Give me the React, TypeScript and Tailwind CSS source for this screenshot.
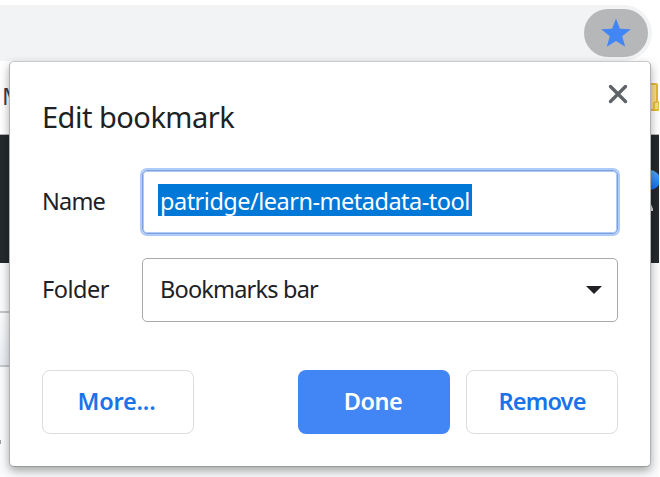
function Star() {
  return (
    <svg viewBox="0 0 30 30" className="h-[30px] w-[30px]" aria-hidden="true">
      <path
        d="M15 .5l3.9 10.2 10.9.6-8.6 6.9 3 10.6L15 22.9l-9.2 5.9 3-10.6L.2 11.3l10.9-.6z"
        fill="#4285f4"
      />
    </svg>
  );
}

function PageBehind() {
  return (
    <div className="flex h-[477px] w-[659px] flex-col overflow-hidden bg-white">
      <div className="mt-[5px] flex h-14 w-[652px] shrink-0 items-center justify-end rounded-r-[28px] bg-[#f1f3f4] pr-1">
        <div className="flex h-12 w-16 items-center justify-center rounded-full bg-[#b6b7b8]">
          <Star />
        </div>
      </div>
      <div className="flex h-[73px] shrink-0 items-start justify-between overflow-hidden">
        <span className="mt-[21px] ml-[2px] text-[24px] leading-7 text-[#3c4043]">M</span>
        <svg viewBox="0 0 17 30" className="mt-[22px] h-[30px] w-[17px]" aria-hidden="true">
          <path d="M0 1h14q1 0 1 1v25H0z" fill="#f8de85" stroke="#e4b934" strokeWidth="2" />
          <path d="M12 27v-6q0-2 2-2h3v8z" fill="#f8de85" stroke="#e4b934" strokeWidth="1.6" />
        </svg>
      </div>
      <div className="h-px shrink-0 bg-[#b6b6b8]" />
      <div className="flex h-32 shrink-0 flex-col items-end bg-[#24292e]">
        <div className="mt-[35px] -mr-px h-5 w-5 rounded-full bg-gradient-to-b from-[#54a3ff] to-[#006eed]" />
        <svg viewBox="0 0 10 14" className="mt-[7px] mr-[6px] h-[14px] w-[10px]" aria-hidden="true">
          <path d="M5 0l5 12v2H0z" fill="#d8dadb" />
        </svg>
      </div>
      <div className="flex flex-1 flex-col bg-[#fafbfc]">
        <div className="mt-12 flex h-14 w-8 items-center border-y-2 border-[#c5c7cb] bg-gradient-to-b from-[#fafbfc] to-[#eaeef3]">
          <div className="-mt-[9px] ml-[9px] h-px w-3 bg-[#62676c]" />
        </div>
        <div className="mt-[73px] h-1 w-px bg-[#999b9e]" />
      </div>
    </div>
  );
}

function EditBookmark() {
  return (
    <section className="absolute top-[61px] left-[9px] flex h-[406px] w-[642px] flex-col rounded-[5px] border border-t-[#c9caca] border-r-[#b0b1b2] border-b-[#989a9b] border-l-[#b0b1b2] bg-white px-8 shadow-[0_4px_10px_rgba(0,0,0,0.34)]">
      <header className="flex h-[107px] items-start justify-between">
        <h1 className="mt-[35px] text-[29px] leading-10 tracking-[-0.5px] whitespace-nowrap">Edit bookmark</h1>
        <button aria-label="Close" className="mt-[22px] -mr-[10px] h-5 w-5">
          <svg viewBox="0 0 20 20" className="h-5 w-5" aria-hidden="true">
            <path d="M2.5 2.5l15 15m0-15l-15 15" stroke="#5f6368" strokeWidth="3.4" strokeLinecap="round" />
          </svg>
        </button>
      </header>
      <div className="mt-px flex h-16 items-center">
        <span className="w-[100px] tracking-[-0.8px]">Name</span>
        <div className="flex h-16 flex-1 items-center rounded-[5px] border border-[#7fa0d8] pb-1 pl-[15px] shadow-[0_0_0_2px_#aecbfa,inset_0_0_0_1px_#aecbfa]">
          <span className="flex h-8 w-[314px] items-center bg-[#0078d7] pt-1 pl-0.5 tracking-[-0.5px] whitespace-nowrap text-white">patridge/learn-metadata-tool</span>
        </div>
      </div>
      <div className="mt-6 flex h-16 items-center">
        <span className="w-[100px] tracking-[-0.5px]">Folder</span>
        <div className="flex h-16 flex-1 items-center justify-between rounded-[5px] border border-[#aaaaab] pr-[15px] pl-[17px]">
          <span className="tracking-[-0.8px]">Bookmarks bar</span>
          <svg viewBox="0 0 16 8" className="h-2 w-4" aria-hidden="true">
            <path d="M0 0h16L8 8z" fill="#202124" />
          </svg>
        </div>
      </div>
      <footer className="mt-12 flex h-16 gap-4 font-semibold tracking-[-0.5px] text-[#1a73e8]">
        <button className="mr-auto w-[152px] rounded-lg border border-[#dadce0] pr-[3px] tracking-[-0.2px]">More...</button>
        <button className="w-[152px] rounded-lg bg-[#4285f4] pr-0.5 text-white">Done</button>
        <button className="w-[152px] rounded-lg border border-[#dadce0] tracking-[-0.8px]">Remove</button>
      </footer>
    </section>
  );
}

export default function App() {
  return (
    <main className="relative h-[477px] w-[660px] overflow-hidden bg-white font-['Noto_Sans',sans-serif] text-[23.5px] text-[#202124]">
      <PageBehind />
      <EditBookmark />
    </main>
  );
}
